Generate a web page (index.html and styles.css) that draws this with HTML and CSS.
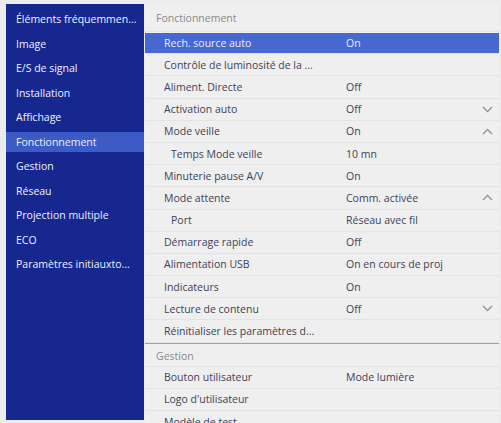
FILE: index.html
```html
<!DOCTYPE html>
<html>
<head>
	<title>Fonctionnement</title>
	<link rel="stylesheet" href="styles.css">
</head>
<body>
<div class="screen">
	<ul class="side">
		<li>Éléments fréquemmen...</li>
		<li>Image</li>
		<li>E/S de signal</li>
		<li>Installation</li>
		<li>Affichage</li>
		<li class="active">Fonctionnement</li>
		<li>Gestion</li>
		<li>Réseau</li>
		<li>Projection multiple</li>
		<li>ECO</li>
		<li>Paramètres initiauxto...</li>
	</ul>
	<div class="panel">
		<div class="group first">
			<div class="group-title">Fonctionnement</div>
			<div class="row selected"><span class="label">Rech. source auto</span><span class="value">On</span><span></span></div>
			<div class="row"><span class="label">Contrôle de luminosité de la ...</span><span class="value"></span><span></span></div>
			<div class="row"><span class="label">Aliment. Directe</span><span class="value">Off</span><span></span></div>
			<div class="row"><span class="label">Activation auto</span><span class="value">Off</span>
				<svg class="chev" width="11" height="7" viewBox="0 0 11 7"><polyline points="1,1 5.5,5.5 10,1"/></svg></div>
			<div class="row"><span class="label">Mode veille</span><span class="value">On</span>
				<svg class="chev" width="11" height="7" viewBox="0 0 11 7"><polyline points="1,6 5.5,1.5 10,6"/></svg></div>
			<div class="row sub"><span class="label">Temps Mode veille</span><span class="value">10 mn</span><span></span></div>
			<div class="row"><span class="label">Minuterie pause A/V</span><span class="value">On</span><span></span></div>
			<div class="row"><span class="label">Mode attente</span><span class="value">Comm. activée</span>
				<svg class="chev" width="11" height="7" viewBox="0 0 11 7"><polyline points="1,6 5.5,1.5 10,6"/></svg></div>
			<div class="row sub"><span class="label">Port</span><span class="value">Réseau avec fil</span><span></span></div>
			<div class="row"><span class="label">Démarrage rapide</span><span class="value">Off</span><span></span></div>
			<div class="row"><span class="label">Alimentation USB</span><span class="value">On en cours de proj</span><span></span></div>
			<div class="row"><span class="label">Indicateurs</span><span class="value">On</span><span></span></div>
			<div class="row"><span class="label">Lecture de contenu</span><span class="value">Off</span>
				<svg class="chev" width="11" height="7" viewBox="0 0 11 7"><polyline points="1,1 5.5,5.5 10,1"/></svg></div>
			<div class="row"><span class="label">Réinitialiser les paramètres d...</span><span class="value"></span><span></span></div>
		</div>
		<div class="group">
			<div class="group-title">Gestion</div>
			<div class="row"><span class="label">Bouton utilisateur</span><span class="value">Mode lumière</span><span></span></div>
			<div class="row"><span class="label">Logo d'utilisateur</span><span class="value"></span><span></span></div>
			<div class="row"><span class="label">Modèle de test</span><span class="value"></span><span></span></div>
		</div>
	</div>
</div>
</body>
</html>
```

FILE: styles.css
```css
body {
	margin: 0;
	background: #ececec;
	font-family: "Open Sans", "Liberation Sans", sans-serif;
	font-size: 10.5px;
}
.screen {
	display: grid;
	grid-template-columns: 138px 1fr;
	column-gap: 1px;
	height: 423px;
	padding: 4px 2px 0 6px;
	box-sizing: border-box;
	overflow: hidden;
}

/* left menu */
.side {
	margin: 0;
	padding: 5px 0 0;
	list-style: none;
	background: #16278f;
	height: 416px;
	box-sizing: border-box;
	display: flex;
	flex-direction: column;
	gap: 4.5px;
}
.side li {
	height: 20px;
	line-height: 20px;
	padding-left: 10px;
	color: #eef0ff;
	white-space: nowrap;
	overflow: hidden;
}
.side li.active {
	background: #3c5bc6;
}

/* settings list */
.panel {
	background: #efefef;
	overflow: hidden;
}
.group-title {
	height: 28px;
	line-height: 28px;
	padding-left: 11px;
	color: #8a8a8a;
	border-bottom: 1px solid #e3e3e3;
	box-sizing: border-box;
}
.group + .group .group-title {
	height: 24px;
	line-height: 24px;
	border-top: 1px solid #9ea2b3;
}
.row {
	display: grid;
	grid-template-columns: 182px 1fr 24px;
	align-items: center;
	height: 22.2px;
	padding-left: 19px;
	border-bottom: 1px solid #e3e3e3;
	box-sizing: border-box;
	color: #3d4258;
	white-space: nowrap;
}
.row.sub .label {
	padding-left: 7px;
}
.row.selected {
	background: #4768d0;
	color: #e9edff;
	border-top: 1px solid #efefef;
}
.chev {
	justify-self: center;
	fill: none;
	stroke: #8d90a0;
	stroke-width: 1.3;
}
```
